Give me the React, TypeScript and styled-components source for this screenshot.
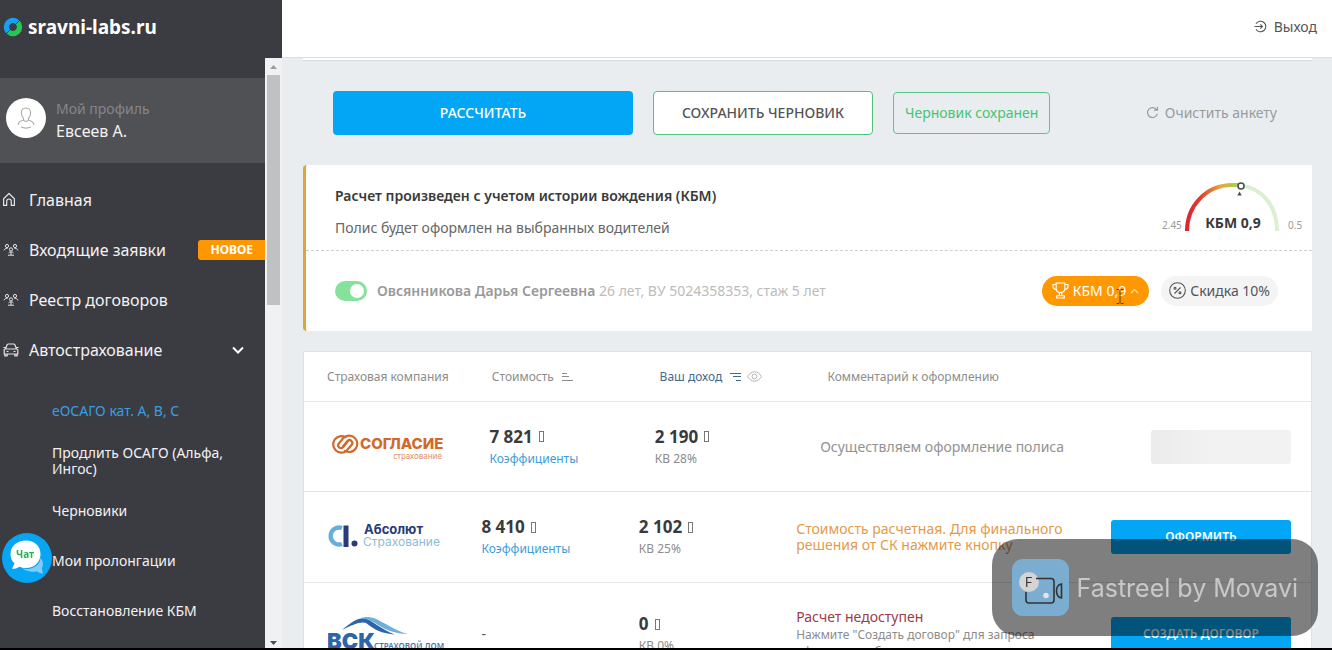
import React from "react";
import styled, { createGlobalStyle, css } from "styled-components";

const GlobalStyle = createGlobalStyle`
  *, *::before, *::after { box-sizing: border-box; }
  body {
    margin: 0;
    font-family: "Noto Sans", "Open Sans", sans-serif;
    font-size: 14px;
    color: #555;
    background: #eaedf0;
  }
  button { font: inherit; color: inherit; background: none; border: 0; padding: 0; margin: 0; cursor: pointer; }
  a { color: inherit; text-decoration: none; }
  p, h2, ul { margin: 0; padding: 0; }
  ul { list-style: none; }
  svg { display: block; flex: none; }
`;

const Page = styled.div`
  display: grid;
  grid-template-columns: 282px minmax(0, 1fr);
  height: 100vh;
  overflow: hidden;
  border-bottom: 2px solid #000;
`;

/* Sidebar */

const Sidebar = styled.aside`
  display: flex;
  flex-direction: column;
  min-height: 0;
  background: #3b3b42;
  color: #f2f2f2;
`;

const Brand = styled.a`
  display: flex;
  align-items: center;
  gap: 5px;
  flex: none;
  height: 58px;
  padding: 0 3px 4px;
  font-size: 19px;
  font-weight: 700;
  color: #fff;
`;

const SidebarBody = styled.div`
  display: flex;
  flex: 1;
  min-height: 0;
`;

const SidebarScroll = styled.div`
  flex: 1;
  min-width: 0;
  overflow: hidden;
  padding-top: 20px;
`;

const ScrollTrack = styled.div`
  display: flex;
  flex-direction: column;
  align-items: center;
  flex: none;
  width: 17px;
  background: #f0f1f3;
`;

const ScrollThumb = styled.div`
  width: 13px;
  height: 39%;
  margin-bottom: auto;
  background: #c0c1c3;
`;

const ScrollArrow = styled.svg`
  width: 17px;
  height: 17px;
`;

const Profile = styled.a`
  display: flex;
  align-items: center;
  gap: 10px;
  height: 85px;
  padding: 0 6px 6px;
  background: #505154;
`;

const Avatar = styled.span`
  display: flex;
  align-items: center;
  justify-content: center;
  width: 40px;
  height: 40px;
  border-radius: 50%;
  background: #fff;
`;

const ProfileText = styled.span`
  display: flex;
  flex-direction: column;
  padding-top: 4px;
  font-size: 16px;
  line-height: 23px;
`;

const ProfileLabel = styled.span`
  color: #85868a;
  font-size: 14px;
`;

const Nav = styled.nav`
  padding-top: 12px;
`;

const NavLink = styled.a`
  display: flex;
  align-items: center;
  height: 50px;
  padding-left: 3px;
  font-size: 16px;
`;

const NavIcon = styled.svg`
  width: 16px;
  height: 16px;
  margin-right: 10px;
  fill: none;
  stroke: #e4e4e6;
`;

const NewTag = styled.span`
  margin-left: auto;
  padding: 0 12px;
  border-radius: 3px 0 0 3px;
  background: #ff9800;
  color: #fff;
  font-size: 12px;
  line-height: 20px;
  font-weight: 700;
`;

const Chevron = styled.svg`
  width: 12px;
  height: 8px;
  margin: 0 21px 0 auto;
`;

const SubNav = styled.ul`
  padding: 11px 20px 0 52px;
`;

const SubItem = styled.li<{ $active?: boolean }>`
  display: flex;
  align-items: center;
  height: 50px;
  font-size: 14px;
  line-height: 16px;
  color: ${(p) => (p.$active ? "#3a9ee0" : "#f2f2f2")};
`;

const ChatButton = styled.button`
  position: fixed;
  left: 2px;
  bottom: 67px;
  width: 50px;
  height: 50px;
`;

/* Main area */

const Main = styled.main`
  display: flex;
  flex-direction: column;
  min-width: 0;
  min-height: 0;
`;

const TopBar = styled.header`
  display: flex;
  align-items: center;
  justify-content: flex-end;
  flex: none;
  height: 58px;
  padding: 0 15px 4px;
  background: #fff;
  border-bottom: 1px solid #dcdfe1;
`;

const ExitLink = styled.a`
  display: flex;
  align-items: center;
  gap: 7px;
  color: #555;
`;

const Content = styled.div`
  flex: 1;
  min-height: 0;
  overflow: hidden;
  padding: 0 20px 0 21px;
`;

const PreviousCardEdge = styled.div`
  height: 3px;
  background: #fff;
  border-bottom: 1px solid #d8dbdd;
`;

const Actions = styled.div`
  display: flex;
  align-items: center;
  gap: 20px;
  padding: 30px 35px 30px 30px;
`;

const actionLook = {
  primary: css`
    width: 300px;
    background: #03a6f5;
    color: #fff;
  `,
  outline: css`
    width: 220px;
    background: #fff;
    border: 1px solid #4fc47c;
    color: #555;
  `,
};

const ActionButton = styled.button<{ $look: "primary" | "outline" }>`
  height: 44px;
  padding-bottom: 2px;
  border-radius: 4px;
  font-size: 14px;
  font-weight: 500;
  ${(p) => actionLook[p.$look]}
`;

const SavedNote = styled.p`
  padding: 0 11px;
  border: 1px solid #5cc687;
  border-radius: 4px;
  color: #45c574;
  line-height: 40px;
`;

const ClearButton = styled.button`
  display: flex;
  align-items: center;
  gap: 6px;
  margin-left: auto;
  padding-bottom: 2px;
  color: #999b9d;
`;

const KbmCard = styled.section`
  margin-bottom: 20px;
  background: #fff;
  border-left: 3px solid #e0a43c;
  border-radius: 4px 0 0 4px;
`;

const KbmHead = styled.div`
  display: flex;
  align-items: center;
  justify-content: space-between;
  height: 86px;
  padding: 0 8px 0 29px;
  border-bottom: 1px dashed #cfcfcf;
`;

const KbmText = styled.div`
  padding-top: 8px;
`;

const KbmTitle = styled.h2`
  font-size: 14px;
  line-height: 32px;
  font-weight: 600;
  color: #3a3a3a;
`;

const KbmNote = styled.p`
  line-height: 32px;
  color: #666;
`;

const KbmDriver = styled.div`
  display: flex;
  align-items: center;
  height: 80px;
  padding: 0 34px 0 29px;
`;

const Driver = styled.label`
  display: flex;
  align-items: center;
  gap: 10px;
  margin-right: auto;
  color: #bcbcbc;
`;

const DriverText = styled.span`
  padding-bottom: 2px;
`;

const DriverName = styled.strong`
  font-weight: 600;
  color: #999;
`;

const Toggle = styled.input`
  appearance: none;
  width: 32px;
  height: 20px;
  margin: 0;
  padding: 3px;
  border-radius: 10px;
  background: #dcdcdc;
  &::before {
    content: "";
    display: block;
    width: 14px;
    height: 14px;
    border-radius: 50%;
    background: #fff;
  }
  &:checked { background: #86e29b; }
  &:checked::before { margin-left: auto; }
`;

const Pill = styled.button<{ $warm?: boolean }>`
  position: relative;
  display: flex;
  align-items: center;
  gap: 4px;
  height: 30px;
  margin-left: 12px;
  padding: 0 ${(p) => (p.$warm ? 10 : 8)}px 1px;
  border-radius: 15px;
  background: ${(p) => (p.$warm ? "#ff9800" : "#f4f4f5")};
  color: ${(p) => (p.$warm ? "#fff" : "#555")};
`;

const Cursor = styled.svg`
  position: absolute;
  right: 25px;
  top: 13px;
  width: 8px;
  height: 15px;
`;

/* Offers table */

const Offers = styled.table`
  display: block;
  background: #fff;
  border: 1px solid #dfe1e4;
  thead, tbody { display: block; }
`;

const OfferRow = styled.tr<{ $last: number; $height: number }>`
  display: grid;
  grid-template-columns: repeat(3, minmax(0, 1fr)) minmax(0, 2fr) ${(p) => p.$last}px;
  align-items: center;
  height: ${(p) => p.$height}px;
  padding: 0 20px;
  border-bottom: 1px solid #e4e5e7;
`;

const HeadCell = styled.th<{ $sorted?: boolean }>`
  padding: 0;
  text-align: left;
  font-size: 12px;
  font-weight: 400;
  color: ${(p) => (p.$sorted ? "#3f6a8c" : "#8c8c8c")};
`;

const HeadLabel = styled.span<{ $inset?: boolean }>`
  display: flex;
  align-items: center;
  gap: 6px;
  padding-left: ${(p) => (p.$inset ? 3 : 0)}px;
`;

const SortButton = styled.button`
  display: flex;
  align-items: center;
  gap: 8px;
`;

const Cell = styled.td`
  padding: 0;
  line-height: 16px;
`;

const LogoCell = styled(Cell)`
  padding-left: 4px;
`;

const Amount = styled.div`
  display: flex;
  align-items: center;
  gap: 6px;
  font-size: 17px;
  line-height: 24px;
  font-weight: 700;
  color: #3a3a3a;
`;

const CurrencyBox = styled.span`
  width: 5px;
  height: 11px;
  border: 1px solid #777;
`;

const SmallLine = styled.div`
  font-size: 12px;
  line-height: 20px;
  color: #8c8c8c;
`;

const RatesLink = styled.a`
  font-size: 12px;
  line-height: 20px;
  color: #3d9bd8;
`;

const Comment = styled.p<{ $tone: "muted" | "warn" | "error" }>`
  max-width: 270px;
  color: ${(p) => ({ muted: "#929292", warn: "#e39a4a", error: "#9c3a4c" })[p.$tone]};
`;

const CommentHint = styled.p`
  max-width: 250px;
  padding-top: 1px;
  font-size: 12px;
  line-height: 17px;
  color: #8c8c8c;
`;

const RowButton = styled.button`
  width: 100%;
  height: 34px;
  border-radius: 3px;
  background: #03a6f5;
  color: #fff;
  font-size: 12px;
  font-weight: 600;
`;

const Placeholder = styled.div`
  height: 34px;
  border-radius: 3px;
  background: linear-gradient(90deg, #ebebeb, #f2f2f2 45%);
`;

/* Watermark */

const Watermark = styled.div`
  position: fixed;
  right: 14px;
  bottom: 14px;
  display: flex;
  align-items: center;
  gap: 8px;
  height: 97px;
  padding: 0 20px;
  border-radius: 26px;
  background: rgba(0, 0, 0, 0.5);
  color: #c8c8c8;
  font-family: Inter, "Liberation Sans", sans-serif;
  font-size: 25px;
`;

const BrandMark = () => (
  <svg width="20" height="20" viewBox="0 0 20 20" fill="none" strokeWidth="5.500">
    <path d="M5.400 14.600A6.500 6.500 0 0 1 14.600 5.400" stroke="#18a0f4" />
    <path d="M14.600 5.400A6.500 6.500 0 0 1 5.400 14.600" stroke="#27c552" />
    <path d="M2 18 8 12M12 8 18 2" stroke="#3b3b42" strokeWidth="1" />
  </svg>
);

const AvatarIcon = () => (
  <svg width="18" height="22" viewBox="0 0 18 22" fill="none" stroke="#a9a9a9" strokeWidth="1.1">
    <path d="M6.600 11.500C5.200 10.200 4.400 8 4.400 5.700 4.400 3 6 1 9 1s4.600 2 4.600 4.700c0 2.300-.8 4.500-2.200 5.800v1.700c3 .5 5.200 1.700 5.600 4.600M6.600 11.500v1.700c-3 .5-5.200 1.700-5.600 4.600M4 20c3 1.300 7 1.300 10 0" />
    <path d="M6.600 13.200c1 1.500 3.800 1.500 4.800 0" />
  </svg>
);

const HomeIcon = () => (
  <NavIcon viewBox="0 0 16 16" strokeWidth="1.2">
    <path d="M.6 13.400V6.700L6 1.500l5.400 5.200v6.700H8.300V9.300a2.300 2.300 0 0 0-4.600 0v4.100Z" strokeLinejoin="round" />
  </NavIcon>
);

const PeopleIcon = () => (
  <NavIcon viewBox="0 0 16 16" strokeWidth="1">
    <circle cx="4" cy="4" r="1.600" />
    <circle cx="12" cy="4" r="1.600" />
    <circle cx="8" cy="7.400" r="1.600" />
    <path d="M1 8.400c.3-1.300 1.400-2 3.600-2.100M15 8.400c-.3-1.300-1.400-2-3.600-2.100M5 13.200h6M5.600 10.800c.6-.6 1.400-.9 2.400-.9s1.800.3 2.400.9M8 10v3" />
  </NavIcon>
);

const CarIcon = () => (
  <NavIcon viewBox="0 0 16 16" strokeWidth="1.2" strokeLinejoin="round">
    <path d="M2.500 7 4 3c.3-.7.700-1 1.400-1h5.200c.7 0 1.100.3 1.400 1l1.500 4M2.200 7h11.600c.6 0 1 .4 1 1v4H1.200V8c0-.6.400-1 1-1ZM1.800 12v1.800h2.400V12M11.800 12v1.800h2.400V12M.4 5.500h2M13.600 5.500h2M3.500 9.500h2M10.500 9.500h2" />
  </NavIcon>
);

const ChatIcon = () => (
  <svg width="50" height="50" viewBox="0 0 50 50">
    <circle cx="25" cy="25" r="25" fill="#08a5f5" />
    <path d="M20 35c9 3 18-2 18.500-10 2.500 3 3.500 6.500 1.300 10l1.200 5.500c-3-.3-4.500-1-6-2.300-5.500 1.300-11 .3-15-3.200Z" fill="#7fcdf8" />
    <path d="M24 7.500c8.500 0 14.500 5.500 14.500 13.500S32.500 35 24 35c-2.500 0-4.500-.4-6.500-1.200-2 1.300-4.500 2.200-7.500 2l2.500-5.300C9.800 28 8.500 25 8.500 21 8.500 13 15 7.500 24 7.500Z" fill="#fff" />
    <text x="23" y="25" textAnchor="middle" fontSize="10" fontWeight="700" fill="#27b455">Чат</text>
  </svg>
);

const ExitIcon = () => (
  <svg width="13" height="13" viewBox="0 0 13 13" fill="none" stroke="#555" strokeWidth="1.1">
    <path d="M2 3.700a5.300 5.300 0 1 1 0 5.600M.5 6.500h8M6.300 4.400l2.100 2.100-2.100 2.100" />
  </svg>
);

const RefreshIcon = () => (
  <svg width="13" height="13" viewBox="0 0 13 13" fill="none" stroke="#999b9d" strokeWidth="1.200">
    <path d="M11.300 8a5 5 0 1 1-.6-4.200M11.500.8v3.400H8" />
  </svg>
);

const Gauge = () => (
  <svg width="144" height="58" viewBox="0 0 144 58" role="img" aria-label="КБМ 0,9">
    <defs>
      <linearGradient id="kbm-scale" x1="25" x2="80" y1="0" y2="0" gradientUnits="userSpaceOnUse">
        <stop offset="0" stopColor="#d9232e" />
        <stop offset=".3" stopColor="#dc4434" />
        <stop offset=".65" stopColor="#e6a93c" />
        <stop offset="1" stopColor="#a6cf4d" />
      </linearGradient>
    </defs>
    <g fill="none" strokeWidth="4">
      <path d="M27 52C27 27 46 6 72.500 6" stroke="url(#kbm-scale)" />
      <path d="M72 6H79" stroke="#a9cf50" />
      <path d="M81 6.500C102 9 117 27 117 52" stroke="#dcefd0" />
    </g>
    <circle cx="81" cy="7" r="3" fill="#fff" stroke="#4a4a4a" strokeWidth="1.500" />
    <path d="m79.500 12.500 2.200 4h-4.400Z" fill="#4a4a4a" />
    <text x="73" y="49" textAnchor="middle" fontSize="14" fontWeight="700" fill="#3a3a3a">КБМ 0,9</text>
    <text x="2" y="50" fontSize="10" fill="#999">2.45</text>
    <text x="128" y="50" fontSize="10" fill="#999">0.5</text>
  </svg>
);

const TrophyIcon = () => (
  <svg width="17" height="17" viewBox="0 0 17 17" fill="none" stroke="#fff" strokeWidth="1.100">
    <path d="M4.200 1h8.600v5.500c0 2.600-1.500 4-4.300 4s-4.300-1.400-4.300-4ZM4.200 2.500H1v2.300c0 1.600 1 2.500 3.400 2.700M12.800 2.500H16v2.300c0 1.600-1 2.500-3.400 2.700M7.300 10.500v3M9.700 10.500v3M4.700 16v-2.300h7.600V16Z" />
  </svg>
);

const PercentIcon = () => (
  <svg width="17" height="17" viewBox="0 0 17 17" fill="none" stroke="#555" strokeWidth="1.100">
    <circle cx="8.500" cy="8.500" r="7.800" />
    <path d="m5.500 11.500 6-6" />
    <circle cx="6" cy="6.300" r="1" />
    <circle cx="11" cy="10.700" r="1" />
  </svg>
);

const PillChevron = () => (
  <svg width="9" height="6" viewBox="0 0 9 6" fill="none" stroke="#ffe0b0" strokeWidth="1.200">
    <path d="m1 5 3.500-3.500L8 5" />
  </svg>
);

const SortUpIcon = () => (
  <svg width="11" height="9" viewBox="0 0 11 9" stroke="#8c8c8c">
    <path d="M0 1.500h5M0 4.500h7M0 8.500h11" />
  </svg>
);

const SortDownIcon = () => (
  <svg width="11" height="9" viewBox="0 0 11 9" stroke="#3f6a8c" strokeWidth="1.200">
    <path d="M0 1.500h11M3 4.500h8M6 8.500h5" />
  </svg>
);

const EyeIcon = () => (
  <svg width="15" height="11" viewBox="0 0 15 11" fill="none" stroke="#b4b4b4">
    <path d="M.6 5.500C2.500 2.300 4.800.8 7.500.8s5 1.500 6.900 4.700c-1.900 3.200-4.200 4.700-6.900 4.700S2.500 8.700.6 5.500Z" />
    <circle cx="7.500" cy="5.500" r="2.400" />
  </svg>
);

const SoglasieLogo = () => (
  <svg width="116" height="28" viewBox="0 0 116 28" role="img" aria-label="Согласие страхование">
    <g fill="none" stroke="#d2692c" strokeWidth="2.200" strokeLinecap="round">
      <path d="M17.500 4.300A8.200 8.200 0 1 0 18.500 17.800L23.500 12A2.800 2.800 0 0 0 19.500 8L15 13.500" />
      <path d="M17 17.900A8.200 8.200 0 1 0 16 4.400L11 10.200A2.800 2.800 0 0 0 15 14.200L19.500 8.700" />
    </g>
    <text x="32" y="16" fontSize="15" fontWeight="800" fontFamily="Inter, sans-serif" fill="#d2692c">СОГЛАСИЕ</text>
    <text x="114" y="26" textAnchor="end" fontSize="8" fill="#dc9168">страхование</text>
  </svg>
);

const AbsolutLogo = () => (
  <svg width="116" height="28" viewBox="0 0 116 28" role="img" aria-label="Абсолют Страхование">
    <path d="M14 5A8.500 8.500 0 1 0 14 21" fill="none" stroke="#67aedb" strokeWidth="4.400" />
    <path d="M15.500 2.500h5v21.500h-5Z" fill="#2b3a78" />
    <circle cx="26.500" cy="20.500" r="3" fill="#2b3a78" />
    <text x="36" y="11" fontSize="13" fontWeight="700" fontFamily="Inter, sans-serif" fill="#2b3a78">Абсолют</text>
    <text x="35" y="23" fontSize="12" fontFamily="Inter, sans-serif" fill="#8fbbd9">Страхование</text>
  </svg>
);

const VskLogo = () => (
  <svg width="116" height="36" viewBox="0 0 116 36" role="img" aria-label="ВСК Страховой дом">
    <path d="M14 14C24 6 30 1.500 37 2.500c6 1 18 12 30 16-12-1-20-4-29-11.500-5-2-14 2-24 7Z" fill="#2d65a8" />
    <path d="M33 2c4-1.500 9-1.500 14 .5C57 7 68 15 80 18c-12-.5-21-3-30-9-6-4-10-6-17-7Z" fill="#6eb0dc" />
    <text x="-1" y="33" fontSize="22" fontWeight="900" fontFamily="Inter, sans-serif" fill="#2d65a8">ВСК</text>
    <text x="46" y="33" fontSize="8" fontWeight="600" fill="#4377ad">СТРАХОВОЙ ДОМ</text>
  </svg>
);

const FastreelIcon = () => (
  <svg width="57" height="57" viewBox="0 0 57 57">
    <rect width="57" height="57" rx="11" fill="#7aadd0" />
    <circle cx="17" cy="23" r="10" fill="#d4d4d4" />
    <path d="M24 19.500h15a3 3 0 0 1 3 3V41a3 3 0 0 1-3 3H17a3 3 0 0 1-3-3v-8" fill="none" stroke="#333" strokeWidth="1.600" />
    <path d="M49.500 25c-3 .5-5 3-5 7s2 6.500 5 7Z" fill="none" stroke="#333" strokeWidth="1.600" />
    <circle cx="34" cy="36.500" r="2.800" fill="#e4e4e4" />
    <text x="13" y="28" fontSize="13" fill="#333">F</text>
  </svg>
);

const SumWithCurrency = ({ value }: { value: string }) => (
  <Amount>
    {value}
    <CurrencyBox />
  </Amount>
);

const Rates = () => <RatesLink href="#rates">Коэффициенты</RatesLink>;

const subItems = [
  "еОСАГО кат. А, В, С",
  "Продлить ОСАГО (Альфа, Ингос)",
  "Черновики",
  "Мои пролонгации",
  "Восстановление КБМ",
];

export default function App() {
  return (
    <>
      <GlobalStyle />
      <Page>
        <Sidebar>
          <Brand href="#home">
            <BrandMark />
            sravni-labs.ru
          </Brand>
          <SidebarBody>
            <SidebarScroll>
              <Profile href="#profile">
                <Avatar><AvatarIcon /></Avatar>
                <ProfileText>
                  <ProfileLabel>Мой профиль</ProfileLabel>
                  Евсеев А.
                </ProfileText>
              </Profile>
              <Nav>
                <NavLink href="#main"><HomeIcon />Главная</NavLink>
                <NavLink href="#requests"><PeopleIcon />Входящие заявки<NewTag>НОВОЕ</NewTag></NavLink>
                <NavLink href="#contracts"><PeopleIcon />Реестр договоров</NavLink>
                <NavLink href="#auto">
                  <CarIcon />
                  Автострахование
                  <Chevron viewBox="0 0 12 8" fill="none" stroke="#fff" strokeWidth="2">
                    <path d="m1 1.500 5 5 5-5" />
                  </Chevron>
                </NavLink>
                <SubNav>
                  {subItems.map((label, i) => (
                    <SubItem key={label} $active={i === 0}><a href="#section">{label}</a></SubItem>
                  ))}
                </SubNav>
              </Nav>
            </SidebarScroll>
            <ScrollTrack>
              <ScrollArrow viewBox="0 0 17 17"><path d="m5 11 3.500-4 3.500 4Z" fill="#9a9b9d" /></ScrollArrow>
              <ScrollThumb />
              <ScrollArrow viewBox="0 0 17 17"><path d="m5 10 3.500 4 3.500-4Z" fill="#4c4c4e" /></ScrollArrow>
            </ScrollTrack>
          </SidebarBody>
        </Sidebar>

        <Main>
          <TopBar>
            <ExitLink href="#exit"><ExitIcon />Выход</ExitLink>
          </TopBar>
          <Content>
            <PreviousCardEdge />
            <Actions>
              <ActionButton $look="primary">РАССЧИТАТЬ</ActionButton>
              <ActionButton $look="outline">СОХРАНИТЬ ЧЕРНОВИК</ActionButton>
              <SavedNote>Черновик сохранен</SavedNote>
              <ClearButton><RefreshIcon />Очистить анкету</ClearButton>
            </Actions>

            <KbmCard>
              <KbmHead>
                <KbmText>
                  <KbmTitle>Расчет произведен с учетом истории вождения (КБМ)</KbmTitle>
                  <KbmNote>Полис будет оформлен на выбранных водителей</KbmNote>
                </KbmText>
                <Gauge />
              </KbmHead>
              <KbmDriver>
                <Driver>
                  <Toggle type="checkbox" defaultChecked />
                  <DriverText><DriverName>Овсянникова Дарья Сергеевна</DriverName> 26 лет, ВУ 5024358353, стаж 5 лет</DriverText>
                </Driver>
                <Pill $warm>
                  <TrophyIcon />
                  КБМ 0,9
                  <PillChevron />
                  <Cursor viewBox="0 0 8 15" fill="none" stroke="#5a3c14">
                    <path d="M.5.5h2.500L4 1.500l1-1h2.500M4 1.500v12M.5 14.500h2.500l1-1 1 1h2.500" />
                  </Cursor>
                </Pill>
                <Pill><PercentIcon />Скидка 10%</Pill>
              </KbmDriver>
            </KbmCard>

            <Offers>
              <thead>
                <OfferRow $last={128} $height={50}>
                  <HeadCell><HeadLabel $inset>Страховая компания</HeadLabel></HeadCell>
                  <HeadCell><SortButton>Стоимость<SortUpIcon /></SortButton></HeadCell>
                  <HeadCell $sorted>
                    <HeadLabel><SortButton>Ваш доход<SortDownIcon /></SortButton><EyeIcon /></HeadLabel>
                  </HeadCell>
                  <HeadCell>Комментарий к оформлению</HeadCell>
                </OfferRow>
              </thead>
              <tbody>
                <OfferRow $last={140} $height={90}>
                  <LogoCell><SoglasieLogo /></LogoCell>
                  <Cell><SumWithCurrency value="7 821" /><Rates /></Cell>
                  <Cell><SumWithCurrency value="2 190" /><SmallLine>КВ 28%</SmallLine></Cell>
                  <Cell><Comment $tone="muted">Осуществляем оформление полиса</Comment></Cell>
                  <Cell><Placeholder /></Cell>
                </OfferRow>
                <OfferRow $last={180} $height={91}>
                  <LogoCell><AbsolutLogo /></LogoCell>
                  <Cell><SumWithCurrency value="8 410" /><Rates /></Cell>
                  <Cell><SumWithCurrency value="2 102" /><SmallLine>КВ 25%</SmallLine></Cell>
                  <Cell><Comment $tone="warn">Стоимость расчетная. Для финального решения от СК нажмите кнопку</Comment></Cell>
                  <Cell><RowButton>ОФОРМИТЬ</RowButton></Cell>
                </OfferRow>
                <OfferRow $last={180} $height={103}>
                  <LogoCell><VskLogo /></LogoCell>
                  <Cell>-</Cell>
                  <Cell><SumWithCurrency value="0" /><SmallLine>КВ 0%</SmallLine></Cell>
                  <Cell>
                    <Comment $tone="error">Расчет недоступен</Comment>
                    <CommentHint>Нажмите "Создать договор" для запроса оформления без расчета</CommentHint>
                  </Cell>
                  <Cell><RowButton>СОЗДАТЬ ДОГОВОР</RowButton></Cell>
                </OfferRow>
              </tbody>
            </Offers>
          </Content>
        </Main>
      </Page>
      <ChatButton aria-label="Чат"><ChatIcon /></ChatButton>
      <Watermark><FastreelIcon />Fastreel by Movavi</Watermark>
    </>
  );
}
